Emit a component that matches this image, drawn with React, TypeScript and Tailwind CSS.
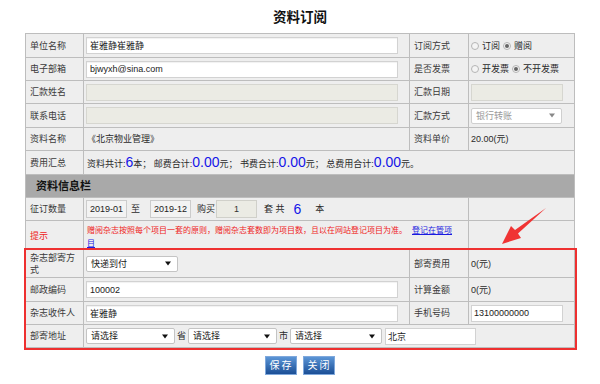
import React from "react";

const Arrow = ({ color }: { color: string }) => (
  <svg width="6" height="5" viewBox="0 0 6 5" className="shrink-0">
    <path d="M0 0.5 L6 0.5 L3 4.5 Z" fill={color} />
  </svg>
);

const FakeSelect = ({
  text,
  w,
  gray,
}: {
  text: string;
  w: string;
  gray?: boolean;
}) => (
  <div
    className={
      gray
        ? "flex h-[16px] items-center justify-between rounded-[2px] border border-[#cfcfcf] bg-white pl-[4px] pr-[6px] text-[9px] leading-[12px] text-[#9a9a9a] " + w
        : "flex h-[16px] items-center justify-between rounded-[2px] border border-[#c4c4c4] bg-white pl-[4px] pr-[6px] text-[9px] leading-[12px] text-[#222] " + w
    }
  >
    <span>{text}</span>
    <Arrow color={gray ? "#888" : "#111"} />
  </div>
);

const Radio = ({ checked }: { checked?: boolean }) => (
  <span className="inline-flex h-[8px] w-[8px] shrink-0 items-center justify-center rounded-full border border-[#b5b5b5] bg-[#f4f4f4]">
    {checked ? <span className="h-[4px] w-[4px] rounded-full bg-[#666]" /> : null}
  </span>
);

const L =
  "flex items-center border-r border-b border-[#bdbdbd] bg-[#eeeeee] pl-[4px] pr-[3px] text-[9px] leading-[12px] text-[#3a3a3a]";
const V =
  "flex items-center border-r border-b border-[#bdbdbd] bg-[#eeeeee] pl-[2px] text-[9px] leading-[12px] text-[#2a2a2a]";

const inputW =
  "h-[17px] w-[312px] border border-[#d2d2d2] bg-white px-[3px] text-[9px] leading-[12px] text-[#222] outline-none shadow-[inset_0_1px_1px_rgba(0,0,0,0.06)]";
const inputDis =
  "h-[17px] w-[312px] border border-[#d6d6d0] bg-[#ebebe4] px-[3px] text-[9px] text-[#222] outline-none";

export default function App() {
  return (
    <div className="relative h-[384px] w-[600px] overflow-hidden bg-white font-['Liberation_Sans','Noto_Sans_CJK_SC',sans-serif] text-[#222]">
      <div className="flex h-[33px] items-center justify-center pt-[2px] text-[13.5px] font-bold leading-[16px] text-[#111]">
        资料订阅
      </div>

      <div className="ml-[25px] w-[550px] border-l border-t border-[#bdbdbd]">
        {/* row 1 */}
        <div className="grid h-[24px] grid-cols-[58px_326px_59px_106px]">
          <div className={L}>单位名称</div>
          <div className={V}>
            <input readOnly value="崔雅静崔雅静" className={inputW} />
          </div>
          <div className={L}>订阅方式</div>
          <div className={V + " gap-[3px]"}>
            <Radio />
            <span>订阅</span>
            <Radio checked />
            <span>赠阅</span>
          </div>
        </div>
        {/* row 2 */}
        <div className="grid h-[23px] grid-cols-[58px_326px_59px_106px]">
          <div className={L}>电子部箱</div>
          <div className={V}>
            <input readOnly value="bjwyxh@sina.com" className={inputW} />
          </div>
          <div className={L}>是否发票</div>
          <div className={V + " gap-[3px]"}>
            <Radio />
            <span>开发票</span>
            <Radio checked />
            <span>不开发票</span>
          </div>
        </div>
        {/* row 3 */}
        <div className="grid h-[23px] grid-cols-[58px_326px_59px_106px]">
          <div className={L}>汇款姓名</div>
          <div className={V}>
            <input readOnly disabled value="" className={inputDis} />
          </div>
          <div className={L}>汇款日期</div>
          <div className={V}>
            <input readOnly disabled value="" className="h-[17px] w-[92px] border border-[#d6d6d0] bg-[#ebebe4] outline-none" />
          </div>
        </div>
        {/* row 4 */}
        <div className="grid h-[24px] grid-cols-[58px_326px_59px_106px]">
          <div className={L}>联系电话</div>
          <div className={V}>
            <input readOnly disabled value="" className={inputDis} />
          </div>
          <div className={L}>汇款方式</div>
          <div className={V}>
            <FakeSelect text="银行转账" w="w-[91px]" gray />
          </div>
        </div>
        {/* row 5 */}
        <div className="grid h-[23px] grid-cols-[58px_326px_59px_106px]">
          <div className={L}>资料名称</div>
          <div className={V + " pl-[3px]"}>《北京物业管理》</div>
          <div className={L}>资料单价</div>
          <div className={V}>20.00(元)</div>
        </div>
        {/* row 6 */}
        <div className="grid h-[24px] grid-cols-[58px_326px_59px_106px]">
          <div className={L}>费用汇总</div>
          <div className={V + " col-span-3 pl-[3px]"}>
            <span className="whitespace-pre">
              资料共计:<span className="text-[14px] leading-[14px] text-[#1515e8]">6</span>本； 邮费合计:
              <span className="text-[14px] leading-[14px] text-[#1515e8]">0.00</span>元； 书费合计:
              <span className="text-[14px] leading-[14px] text-[#1515e8]">0.00</span>元； 总费用合计:
              <span className="text-[14px] leading-[14px] text-[#1515e8]">0.00</span>元。
            </span>
          </div>
        </div>
        {/* header */}
        <div className="flex h-[23px] items-center border-r border-b border-[#bdbdbd] bg-[#a9a9a9] pl-[10px] text-[11px] font-bold leading-[14px] text-[#111]">
          资料信息栏
        </div>
        {/* 征订数量 */}
        <div className="grid h-[23px] grid-cols-[58px_326px_59px_106px]">
          <div className={L}>征订数量</div>
          <div className={V + " col-span-2"}>
            <input readOnly value="2019-01" className="h-[18px] w-[41px] border border-[#cccccc] bg-[#f3f3f3] text-center text-[9px] text-[#222] outline-none" />
            <span className="ml-[4px]">至</span>
            <input readOnly value="2019-12" className="ml-[10px] h-[18px] w-[41px] border border-[#cccccc] bg-[#f3f3f3] text-center text-[9px] text-[#222] outline-none" />
            <span className="ml-[6px]">购买</span>
            <input readOnly disabled value="1" className="ml-[1px] h-[18px] w-[41px] border border-[#d0d0ca] bg-[#ebebe4] text-center text-[9px] text-[#333] outline-none" />
            <span className="ml-[7px] whitespace-pre">套 共</span>
            <span className="ml-[9px] text-[14px] leading-[14px] text-[#1515e8]">6</span>
            <span className="ml-[14px]">本</span>
          </div>
          <div className={V}></div>
        </div>
        {/* 提示 */}
        <div className="grid h-[29px] grid-cols-[58px_326px_59px_106px]">
          <div className={L + " text-[#ee2222]"}>提示</div>
          <div className="col-span-2 border-r border-b border-[#bdbdbd] bg-[#eeeeee] pl-[3px] pt-[3px] text-[8px] leading-[13px] text-[#ee2222]">
            赠阅杂志按照每个项目一套的原则，赠阅杂志套数即为项目数，且以在网站登记项目为准。
            <a className="ml-[5px] text-[#1a1ae0] underline">
              登记在管项
              <br />目
            </a>
          </div>
          <div className={V}></div>
        </div>

        {/* highlighted block */}
        <div className="outline-2 outline-offset-0 outline-[#ee3030]">
          <div className="grid h-[28px] grid-cols-[58px_326px_59px_106px]">
            <div className={L + " pr-[4px]"}>杂志部寄方式</div>
            <div className={V}>
              <FakeSelect text="快递到付" w="w-[92px]" />
            </div>
            <div className={L}>部寄费用</div>
            <div className={V}>0(元)</div>
          </div>
          <div className="grid h-[24px] grid-cols-[58px_326px_59px_106px]">
            <div className={L}>邮政编码</div>
            <div className={V}>
              <input readOnly value="100002" className={inputW} />
            </div>
            <div className={L}>计算金额</div>
            <div className={V}>0(元)</div>
          </div>
          <div className="grid h-[23px] grid-cols-[58px_326px_59px_106px]">
            <div className={L}>杂志收件人</div>
            <div className={V}>
              <input readOnly value="崔雅静" className={inputW} />
            </div>
            <div className={L}>手机号码</div>
            <div className={V}>
              <input readOnly value="13100000000" className="h-[17px] w-[92px] border border-[#d2d2d2] bg-white px-[2px] text-[9px] text-[#222] outline-none" />
            </div>
          </div>
          <div className="grid h-[23px] grid-cols-[58px_326px_59px_106px]">
            <div className={L}>部寄地址</div>
            <div className={V + " col-span-3"}>
              <FakeSelect text="请选择" w="w-[89px]" />
              <span className="mx-[2px]">省</span>
              <FakeSelect text="请选择" w="w-[89px]" />
              <span className="mx-[2px]">市</span>
              <FakeSelect text="请选择" w="w-[92px]" />
              <input readOnly value="北京" className="ml-[3px] h-[17px] w-[91px] border border-[#d2d2d2] bg-white px-[2px] text-[9px] text-[#222] outline-none" />
            </div>
          </div>
        </div>
      </div>

      <div className="mt-[8px] flex justify-center gap-[6px] pr-[1px]">
        <button className="h-[19px] w-[32px] border border-[#7fa8dc] bg-gradient-to-b from-[#5b95d6] to-[#1b4f96] pl-[2px] text-[10px] font-normal leading-[12px] tracking-[2px] text-white">
          保存
        </button>
        <button className="h-[19px] w-[32px] border border-[#7fa8dc] bg-gradient-to-b from-[#5b95d6] to-[#1b4f96] pl-[2px] text-[10px] font-normal leading-[12px] tracking-[2px] text-white">
          关闭
        </button>
      </div>

      <svg
        className="pointer-events-none absolute left-0 top-0"
        width="600"
        height="384"
        viewBox="0 0 600 384"
      >
        <polygon
          points="502,244 511,226 515,230 546,208 518,233.5 521,238"
          fill="#f03434"
        />
      </svg>
    </div>
  );
}
